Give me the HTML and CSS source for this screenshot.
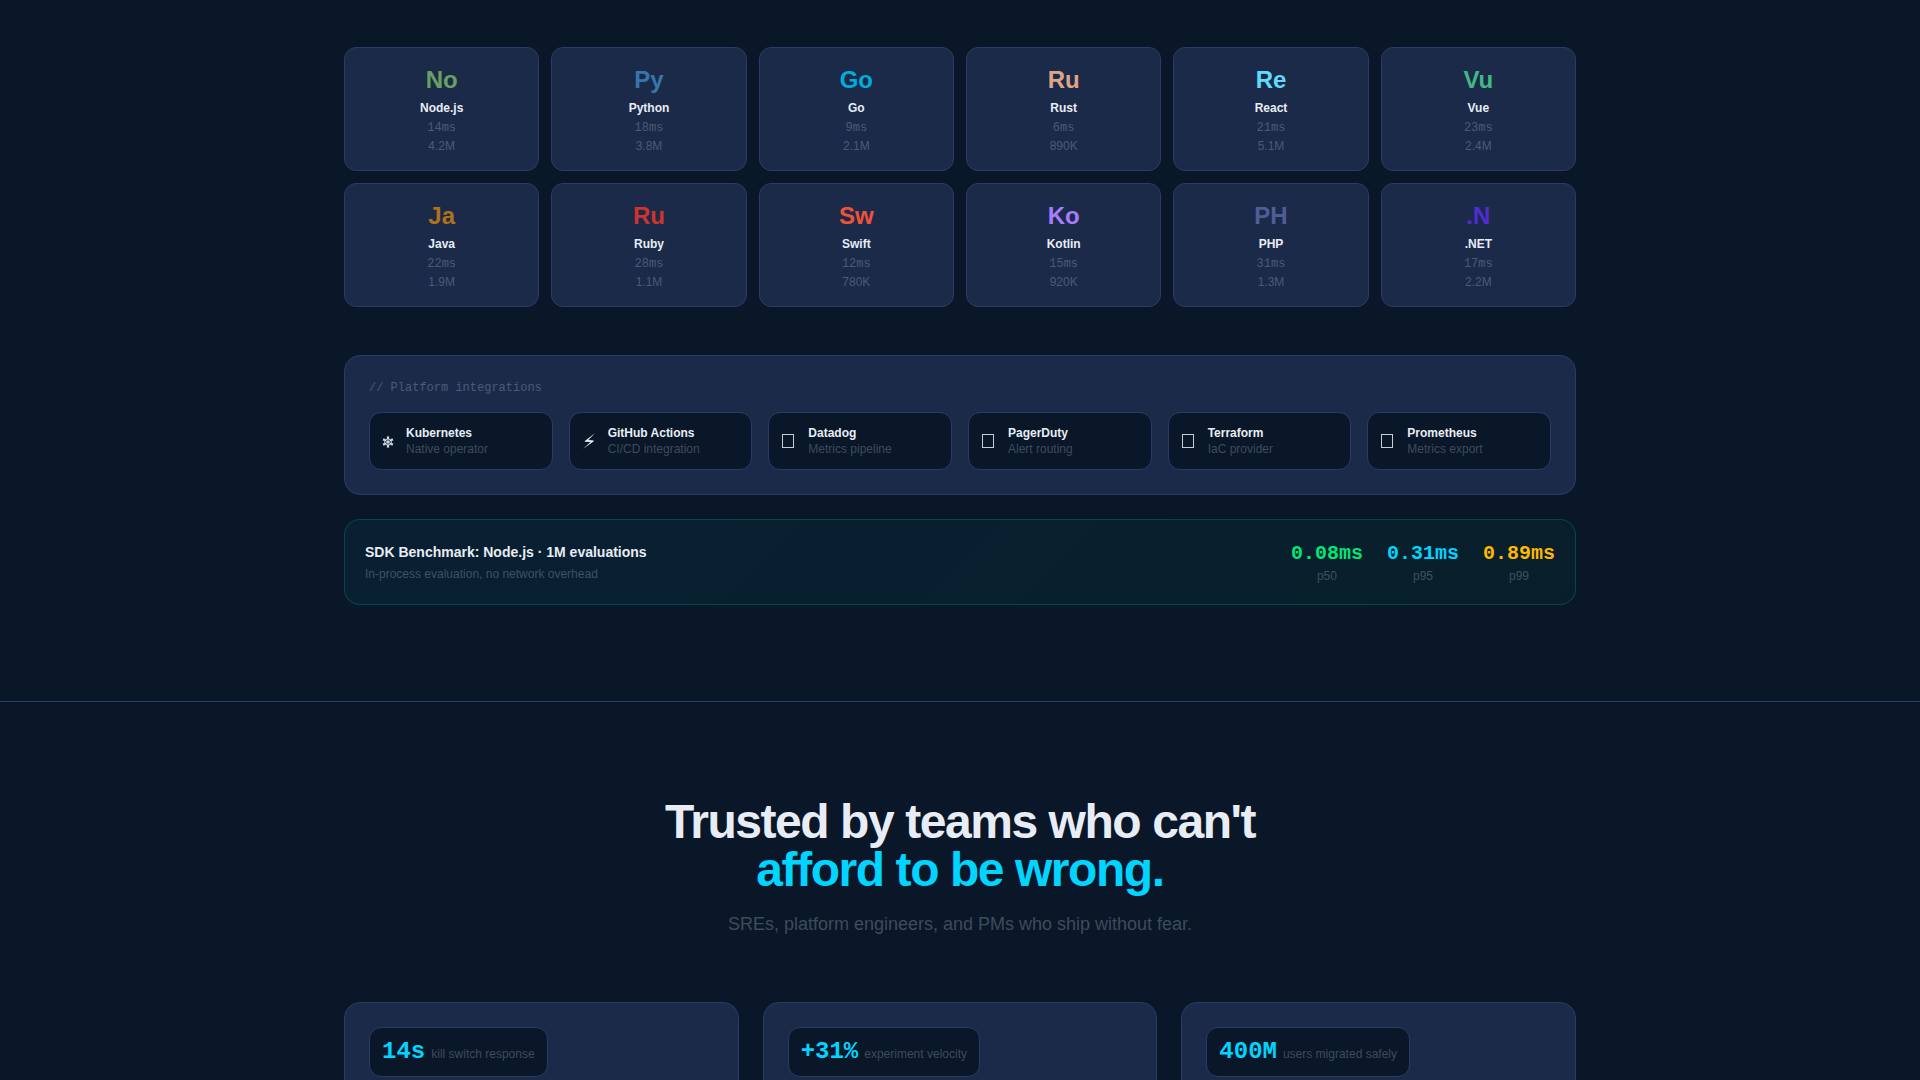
FILE: index.html
```html
<!DOCTYPE html>
<html lang="en">
<head>
<meta charset="utf-8">
<title>SDKs and integrations</title>
<link rel="stylesheet" href="styles.css">
</head>
<body>
<svg class="sprite" aria-hidden="true">
  <symbol id="icon-box" viewBox="0 0 15 16">
    <rect x="1.5" y="1.5" width="11" height="13" fill="none" stroke="currentColor" stroke-opacity=".85"/>
  </symbol>
</svg>
<section class="section sdks">
  <div class="container">
    <ul class="sdk-grid">
      <li class="sdk"><span class="sdk-mark node">No</span><b class="sdk-name">Node.js</b><span class="sdk-latency">14ms</span><span class="sdk-count">4.2M</span></li>
      <li class="sdk"><span class="sdk-mark python">Py</span><b class="sdk-name">Python</b><span class="sdk-latency">18ms</span><span class="sdk-count">3.8M</span></li>
      <li class="sdk"><span class="sdk-mark go">Go</span><b class="sdk-name">Go</b><span class="sdk-latency">9ms</span><span class="sdk-count">2.1M</span></li>
      <li class="sdk"><span class="sdk-mark rust">Ru</span><b class="sdk-name">Rust</b><span class="sdk-latency">6ms</span><span class="sdk-count">890K</span></li>
      <li class="sdk"><span class="sdk-mark react">Re</span><b class="sdk-name">React</b><span class="sdk-latency">21ms</span><span class="sdk-count">5.1M</span></li>
      <li class="sdk"><span class="sdk-mark vue">Vu</span><b class="sdk-name">Vue</b><span class="sdk-latency">23ms</span><span class="sdk-count">2.4M</span></li>
      <li class="sdk"><span class="sdk-mark java">Ja</span><b class="sdk-name">Java</b><span class="sdk-latency">22ms</span><span class="sdk-count">1.9M</span></li>
      <li class="sdk"><span class="sdk-mark ruby">Ru</span><b class="sdk-name">Ruby</b><span class="sdk-latency">28ms</span><span class="sdk-count">1.1M</span></li>
      <li class="sdk"><span class="sdk-mark swift">Sw</span><b class="sdk-name">Swift</b><span class="sdk-latency">12ms</span><span class="sdk-count">780K</span></li>
      <li class="sdk"><span class="sdk-mark kotlin">Ko</span><b class="sdk-name">Kotlin</b><span class="sdk-latency">15ms</span><span class="sdk-count">920K</span></li>
      <li class="sdk"><span class="sdk-mark php">PH</span><b class="sdk-name">PHP</b><span class="sdk-latency">31ms</span><span class="sdk-count">1.3M</span></li>
      <li class="sdk"><span class="sdk-mark dotnet">.N</span><b class="sdk-name">.NET</b><span class="sdk-latency">17ms</span><span class="sdk-count">2.2M</span></li>
    </ul>

    <div class="panel">
      <h3 class="panel-title">// Platform integrations</h3>
      <ul class="integration-grid">
        <li class="integration">
          <svg class="integration-icon helm" viewBox="0 0 12 16" fill="none" stroke="currentColor" aria-hidden="true">
            <path d="M6 5.4l3.2 1.8v3.6L6 12.6l-3.2-1.8V7.2z" stroke-width="1"/>
            <path d="M6 3v12M1 6l10 6M1 12l10-6" stroke-width="1"/>
            <path d="M4.8 3.9l1.2 1 1.2-1M4.8 14.1l1.2-1 1.2 1M.8 7.4l1.5-.5-.2-1.5M11.2 7.4l-1.5-.5.2-1.5M.8 10.6l1.5.5-.2 1.5M11.2 10.6l-1.5.5.2 1.5" stroke-width=".9"/>
          </svg>
          <div><b class="integration-name">Kubernetes</b><p class="note">Native operator</p></div>
        </li>
        <li class="integration">
          <svg class="integration-icon bolt" viewBox="0 0 14 16" fill="currentColor" aria-hidden="true">
            <path d="M12.9.3L2.8 7.9 2.6 8.7l5.9.4L1.2 15.7l10.3-7.3.2-.8-5.3-.5z"/>
          </svg>
          <div><b class="integration-name">GitHub Actions</b><p class="note">CI/CD integration</p></div>
        </li>
        <li class="integration"><svg class="integration-icon" aria-hidden="true"><use href="#icon-box"/></svg><div><b class="integration-name">Datadog</b><p class="note">Metrics pipeline</p></div></li>
        <li class="integration"><svg class="integration-icon" aria-hidden="true"><use href="#icon-box"/></svg><div><b class="integration-name">PagerDuty</b><p class="note">Alert routing</p></div></li>
        <li class="integration"><svg class="integration-icon" aria-hidden="true"><use href="#icon-box"/></svg><div><b class="integration-name">Terraform</b><p class="note">IaC provider</p></div></li>
        <li class="integration"><svg class="integration-icon" aria-hidden="true"><use href="#icon-box"/></svg><div><b class="integration-name">Prometheus</b><p class="note">Metrics export</p></div></li>
      </ul>
    </div>

    <div class="benchmark">
      <div>
        <h3 class="benchmark-title">SDK Benchmark: Node.js · 1M evaluations</h3>
        <p class="note">In-process evaluation, no network overhead</p>
      </div>
      <dl class="percentiles">
        <div class="percentile"><dd class="value p50">0.08ms</dd><dt class="note">p50</dt></div>
        <div class="percentile"><dd class="value p95">0.31ms</dd><dt class="note">p95</dt></div>
        <div class="percentile"><dd class="value p99">0.89ms</dd><dt class="note">p99</dt></div>
      </dl>
    </div>
  </div>
</section>

<section class="section stories">
  <div class="container">
    <h2 class="headline">Trusted by teams who can't<br><span class="accent">afford to be wrong.</span></h2>
    <p class="lead">SREs, platform engineers, and PMs who ship without fear.</p>
    <div class="story-grid">
      <article class="story"><div class="metric"><b class="metric-value">14s</b><span class="note">kill switch response</span></div></article>
      <article class="story"><div class="metric"><b class="metric-value">+31%</b><span class="note">experiment velocity</span></div></article>
      <article class="story"><div class="metric"><b class="metric-value">400M</b><span class="note">users migrated safely</span></div></article>
    </div>
  </div>
</section>
</body>
</html>
```
FILE: styles.css
```css
:root {
  --bg: #091728;
  --card: #1c2a4a;
  --line: #2d3a66;
  --text: #e8edf5;
  --muted: rgba(225, 237, 250, 0.25);
  --cyan: #00d4ff;
  --mono: "Liberation Mono", monospace;
}

* { box-sizing: border-box; margin: 0; padding: 0; }

body {
  background: var(--bg);
  color: var(--text);
  font-family: "Liberation Sans", Arial, sans-serif;
  font-size: 16px;
  line-height: 24px;
  overflow-x: hidden;
}

ul { list-style: none; }

.sprite { display: none; }

.container {
  max-width: 1280px;
  margin: 0 auto;
  padding: 0 24px;
}

.sdks { padding: 47px 0 96px; }

.sdk-grid {
  display: grid;
  grid-template-columns: repeat(6, 1fr);
  gap: 12px;
  margin-bottom: 48px;
}

.sdk {
  display: flex;
  flex-direction: column;
  align-items: center;
  padding: 16px;
  border: 1px solid var(--line);
  border-radius: 12px;
  background: var(--card);
  font-size: 12px;
  line-height: 16px;
}

.sdk-mark {
  margin-bottom: 4px;
  font-size: 24px;
  font-weight: 700;
  line-height: 32px;
}

.sdk-name { margin-bottom: 4px; }

.sdk-latency {
  margin-bottom: 2px;
  color: var(--muted);
  font-family: var(--mono);
}

.sdk-count { color: var(--muted); }

.node { color: #68a063; }
.python { color: #3776ab; }
.go { color: #00add8; }
.rust { color: #dea584; }
.react { color: #61dafb; }
.vue { color: #42b883; }
.java { color: #b07219; }
.ruby { color: #cc342d; }
.swift { color: #f05138; }
.kotlin { color: #a97bff; }
.php { color: #4f5d95; }
.dotnet { color: #512bd4; }

.panel {
  margin-bottom: 24px;
  padding: 24px;
  border: 1px solid var(--line);
  border-radius: 16px;
  background: var(--card);
}

.panel-title {
  margin-bottom: 16px;
  color: var(--muted);
  font: 400 12px/16px var(--mono);
}

.integration-grid {
  display: grid;
  grid-template-columns: repeat(6, 1fr);
  gap: 16px;
}

.integration {
  display: flex;
  align-items: center;
  gap: 12px;
  padding: 12px;
  border: 1px solid var(--line);
  border-radius: 12px;
  background: var(--bg);
}

.integration-icon {
  flex: none;
  width: 15px;
  height: 16px;
}

.integration-icon.helm { width: 12px; }
.integration-icon.bolt { width: 14px; }

.integration-name {
  display: block;
  font-size: 12px;
  line-height: 16px;
}

.note {
  color: var(--muted);
  font-size: 12px;
  line-height: 16px;
}

.benchmark {
  display: flex;
  align-items: center;
  justify-content: space-between;
  padding: 20px;
  border: 1px solid rgba(0, 230, 180, 0.2);
  border-radius: 16px;
  background: linear-gradient(135deg, rgba(0, 212, 255, 0.05), rgba(0, 230, 118, 0.04));
}

.benchmark-title {
  margin-bottom: 4px;
  font-size: 14px;
  line-height: 20px;
}

.percentiles { display: flex; gap: 24px; text-align: center; }

.value { font: 700 20px/28px var(--mono); }
.p50 { color: #00e676; }
.p95 { color: var(--cyan); }
.p99 { color: #ffb800; }

.stories {
  border-top: 1px solid var(--line);
  padding: 96px 0;
}

.headline {
  margin-bottom: 16px;
  font-size: 48px;
  line-height: 48px;
  letter-spacing: -0.03em;
  text-align: center;
}

.accent { color: var(--cyan); }

.lead {
  margin-bottom: 64px;
  color: var(--muted);
  font-size: 18px;
  line-height: 28px;
  text-align: center;
}

.story-grid {
  display: grid;
  grid-template-columns: repeat(3, 1fr);
  gap: 24px;
}

.story {
  min-height: 280px;
  padding: 24px;
  border: 1px solid var(--line);
  border-radius: 16px;
  background: var(--card);
}

.metric {
  display: inline-flex;
  align-items: baseline;
  gap: 6px;
  padding: 8px 12px;
  border: 1px solid var(--line);
  border-radius: 12px;
  background: var(--bg);
}

.metric-value {
  color: var(--cyan);
  font: 700 24px/32px var(--mono);
}
```
